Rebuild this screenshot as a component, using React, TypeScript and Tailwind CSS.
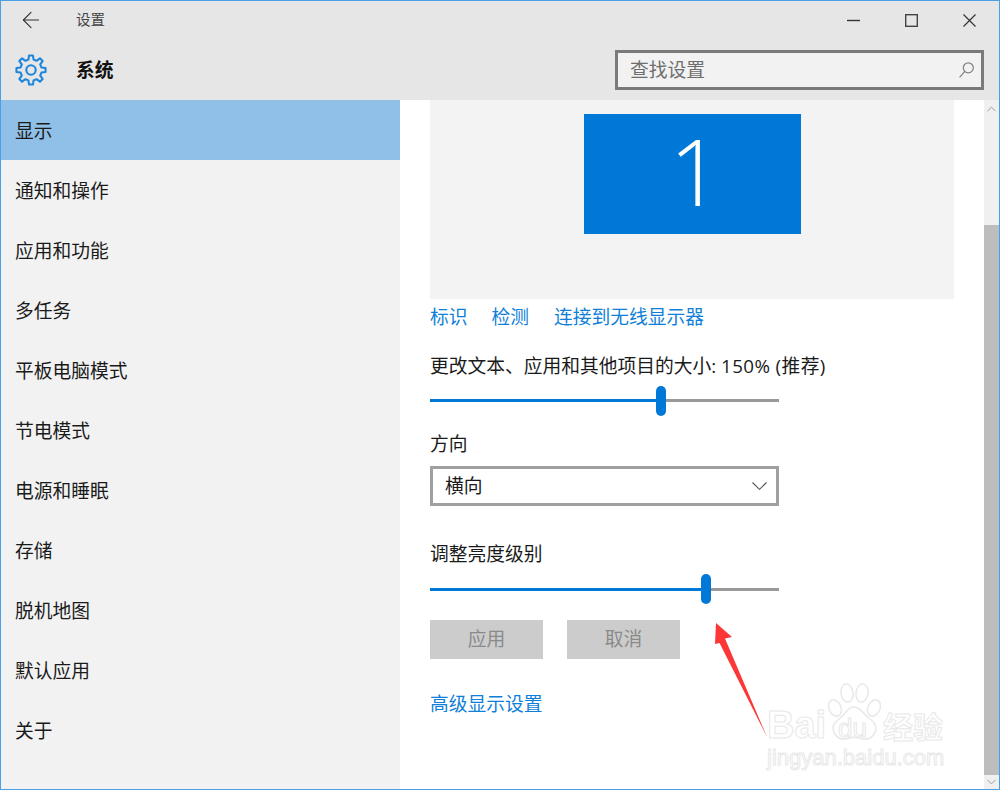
import { ArrowLeft, ChevronDown, ChevronUp } from 'lucide-react'

const navItems = ['显示', '通知和操作', '应用和功能', '多任务', '平板电脑模式', '节电模式', '电源和睡眠', '存储', '脱机地图', '默认应用', '关于']

// 8 tooth outline gear, same shape as the settings app header icon
const gearPath = () => {
  const points: string[] = []
  const teeth = 8
  for (let i = 0; i < teeth; i++) {
    const a = (i / teeth) * Math.PI * 2 - Math.PI / 2
    const step = (Math.PI * 2) / teeth
    const corners: [number, number][] = [
      [11.4, -0.5],
      [15.6, -0.27],
      [15.6, 0.27],
      [11.4, 0.5],
    ]
    corners.forEach(([r, k]) => {
      const t = a + k * step * 0.62
      points.push(`${(17 + r * Math.cos(t)).toFixed(2)} ${(17 + r * Math.sin(t)).toFixed(2)}`)
    })
  }
  return `M${points.join('L')}Z`
}

const Slider = ({ fill, trackTop }: { fill: number; trackTop: number }) => (
  <div className="relative h-[30px] w-[349px]">
    <div className="absolute left-0 right-0 h-[3px] bg-[#999999]" style={{ top: trackTop }} />
    <div className="absolute left-0 h-[3px] bg-[#0078d7]" style={{ top: trackTop, width: fill }} />
    <div className="absolute top-0 h-[30px] w-[10px] rounded-[5px] bg-[#0078d7]" style={{ left: fill - 5 }} />
  </div>
)

export default function App() {
  return (
    <div className="relative flex h-[790px] w-[1000px] flex-col overflow-hidden border border-[#4aa0e6] bg-white font-['Open_Sans','Noto_Sans_CJK_SC',sans-serif] text-[18.75px] text-[#1a1a1a]">
      {/* Header */}
      <div className="h-[99px] shrink-0 bg-[#e6e6e6]">
        <div className="flex h-[38px] items-center">
          <ArrowLeft className="ml-[17px] h-[26px] w-[26px] text-[#333333]" strokeWidth={1} />
          <span className="ml-[32px] text-[14.5px] text-[#444444]">设置</span>
          <div className="ml-auto mr-[23px] flex items-center gap-[45px]">
            <svg viewBox="0 0 13 13" className="h-[13px] w-[13px]" stroke="#333333" strokeWidth="1.4">
              <path d="M0 6.5H13" />
            </svg>
            <svg viewBox="0 0 13 13" className="h-[13px] w-[13px]" fill="none" stroke="#444444" strokeWidth="1.4">
              <rect x="0.7" y="0.7" width="11.6" height="11.6" />
            </svg>
            <svg viewBox="0 0 13 13" className="h-[13px] w-[13px]" fill="none" stroke="#333333" strokeWidth="1.2">
              <path d="M0.5 0.5L12.5 12.5M12.5 0.5L0.5 12.5" />
            </svg>
          </div>
        </div>
        <div className="mt-[11px] flex items-center">
          <svg viewBox="0 0 34 34" className="ml-[14px] h-[32px] w-[32px]" fill="none" stroke="#1c86dc" strokeWidth="2.2" strokeLinejoin="round">
            <path d={gearPath()} />
            <circle cx="17" cy="17" r="5" />
          </svg>
          <span className="ml-[29px] font-bold text-[#111111]">系统</span>
          <div className="ml-auto mr-[15px] flex h-[40px] w-[369px] items-center justify-between border-[3px] border-[#7a7a7a] bg-[#f2f2f2] pl-[12px] pr-[7px]">
            <span className="text-[#6e6e6e]">查找设置</span>
            <svg viewBox="0 0 15 16" className="h-[16px] w-[15px]" fill="none" stroke="#808080" strokeWidth="1.2">
              <circle cx="9.3" cy="5.8" r="5" />
              <path d="M5.8 9.4L0.6 15.4" />
            </svg>
          </div>
        </div>
      </div>

      <div className="flex min-h-0 flex-1">
        {/* Sidebar */}
        <div className="w-[399px] shrink-0 bg-[#f2f2f2]">
          {navItems.map((item, i) => (
            <div key={item} className={`flex h-[60px] items-center pl-[14px] pt-[2px] ${i === 0 ? 'bg-[#90bfe8]' : ''}`}>
              {item}
            </div>
          ))}
        </div>

        {/* Content */}
        <div className="min-w-0 flex-1 pl-[30px]">
          <div className="flex h-[199px] w-[524px] justify-center bg-[#f3f3f3] pt-[14px]">
            <div className="flex h-[120px] w-[217px] items-center justify-center bg-[#0078d7] pb-[6px] pl-[7px] text-[92px] font-light leading-none text-white">1</div>
          </div>
          <div className="mt-[5px] flex h-[26px] items-center text-[#0f7fd8]">
            <span>标识</span>
            <span className="ml-[24px]">检测</span>
            <span className="ml-[25px]">连接到无线显示器</span>
          </div>
          <div className="mt-[23px] flex h-[26px] items-center whitespace-pre">
            更改文本、应用和其他项目的大小: <span className="tracking-[0.4px]">150% (推荐)</span>
          </div>
          <div className="mt-[7px]">
            <Slider fill={231} trackTop={13} />
          </div>
          <div className="mt-[15px] flex h-[26px] items-center">方向</div>
          <div className="mt-[9px] flex h-[40px] w-[349px] items-center justify-between border-[3px] border-[#a0a0a0] pl-[12px] pr-[9px]">
            <span>横向</span>
            <svg viewBox="0 0 15 8" className="h-[8px] w-[15px]" fill="none" stroke="#555555" strokeWidth="1.1">
              <path d="M0.5 0.5L7.5 7.3L14.5 0.5" />
            </svg>
          </div>
          <div className="mt-[35px] flex h-[26px] items-center">调整亮度级别</div>
          <div className="mt-[7px]">
            <Slider fill={276} trackTop={14} />
          </div>
          <div className="mt-[16px] flex gap-[24px]">
            <div className="flex h-[39px] w-[113px] items-center justify-center bg-[#cccccc] text-[#8a8a8a]">应用</div>
            <div className="flex h-[39px] w-[113px] items-center justify-center bg-[#cccccc] text-[#8a8a8a]">取消</div>
          </div>
          <div className="mt-[32px] flex h-[26px] items-center text-[#0f7fd8]">高级显示设置</div>
        </div>

        {/* Scrollbar */}
        <div className="flex w-[15px] shrink-0 flex-col bg-[#f0f0f0]">
          <div className="flex h-[17px] items-center justify-center">
            <ChevronUp className="h-[16px] w-[16px] text-[#8a8a8a]" strokeWidth={1.3} />
          </div>
          <div className="mt-[108px] flex-1 bg-[#bdbdbd]" />
          <div className="flex h-[14px] items-center justify-center">
            <ChevronDown className="h-[16px] w-[16px] text-[#8a8a8a]" strokeWidth={1.3} />
          </div>
        </div>
      </div>

      {/* Red annotation arrow */}
      <svg viewBox="0 0 70 120" className="absolute left-[699px] top-[619px] h-[120px] w-[70px]" fill="#fb3737">
        <path d="M16 3 L32 17 L25 18.5 L67 117 L19.5 23 L15 24 Z" />
      </svg>

      {/* Baidu watermark */}
      <div className="absolute left-[766px] top-[680px] h-[90px] w-[215px] font-['Liberation_Sans',sans-serif] text-white [-webkit-text-stroke:1px_#e8e8e8]">
        <svg viewBox="0 0 54 58" className="absolute left-[60px] top-[2px] h-[58px] w-[54px]" fill="#ffffff" stroke="#e8e8e8" strokeWidth="1.5">
          <ellipse cx="8" cy="25" rx="6" ry="8.5" transform="rotate(-25 8 25)" />
          <ellipse cx="20" cy="10" rx="6" ry="9" transform="rotate(-8 20 10)" />
          <ellipse cx="35" cy="10" rx="6" ry="9" transform="rotate(8 35 10)" />
          <ellipse cx="47" cy="25" rx="6" ry="8.5" transform="rotate(25 47 25)" />
          <path d="M27 24 C20 24 19 31 12 36 C5 41 5 47 8 51 C11 56 17 57 23 55 C26 54 29 54 32 55 C38 57 44 56 47 51 C50 47 50 41 43 36 C36 31 34 24 27 24 Z" />
        </svg>
        <div className="absolute left-0 top-[24px] text-[38px] font-bold leading-[40px]">Bai</div>
        <div className="absolute left-[71px] top-[33px] text-[26px] leading-[28px]">du</div>
        <div className="absolute left-[116px] top-[25px] font-['Noto_Sans_CJK_SC',sans-serif] text-[30px] font-bold leading-[38px]">经验</div>
        <div className="absolute left-0 top-[63px] whitespace-nowrap text-[22px] leading-[28px]">jingyan.baidu.com</div>
      </div>
    </div>
  )
}
